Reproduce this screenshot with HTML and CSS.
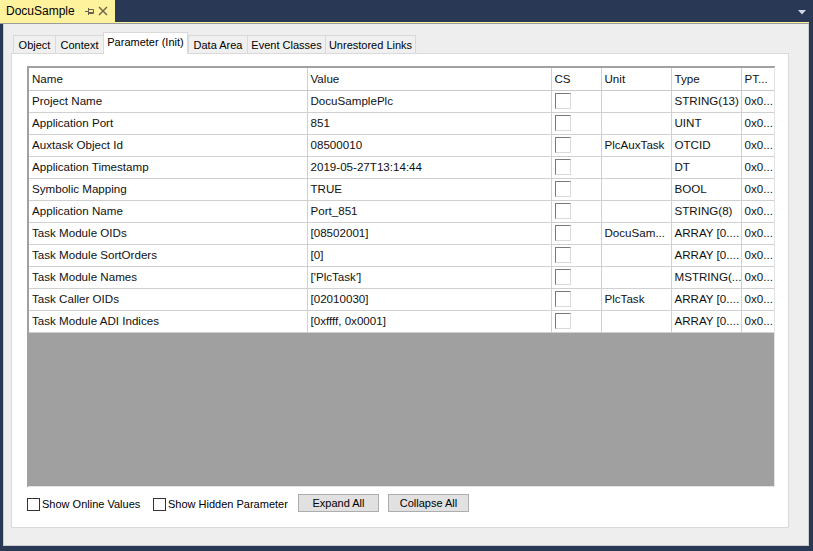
FILE: index.html
```html
<!DOCTYPE html>
<html>
<head>
<meta charset="utf-8">
<link rel="stylesheet" href="styles.css">
</head>
<body>
<div class="titlebar">
  <div class="doctab">
    <span class="doctitle">DocuSample</span>
    <svg class="pin" width="9" height="9" viewBox="0 0 9 9"><path d="M0 4.5H3.5M3.5 1V8M3.5 2.5H8.5V6.5H3.5M3.5 5.5H8.5" fill="none" stroke="#6b6348" stroke-width="1"/></svg>
    <svg class="close" width="10" height="10" viewBox="0 0 10 10"><path d="M1 1L9 9M9 1L1 9" stroke="#6b6348" stroke-width="1.4"/></svg>
  </div>
  <div class="spacer"></div>
  <svg class="dropdown" width="8" height="5" viewBox="0 0 8 5"><path d="M0 0H8L4 4.5Z" fill="#d0d7e5"/></svg>
</div>
<div class="accent"></div>
<div class="window">
  <div class="tabs">
    <div class="tab t-object">Object</div>
    <div class="tab t-context">Context</div>
    <div class="tab active t-param">Parameter (Init)</div>
    <div class="tab t-data">Data Area</div>
    <div class="tab t-event">Event Classes</div>
    <div class="tab t-links">Unrestored Links</div>
  </div>
  <div class="panel">
    <div class="grid">
      <table>
        <colgroup>
          <col class="c-name"><col class="c-value"><col class="c-cs"><col class="c-unit"><col class="c-type"><col class="c-pt">
        </colgroup>
        <thead>
          <tr><th>Name</th><th>Value</th><th>CS</th><th>Unit</th><th>Type</th><th>PT...</th></tr>
        </thead>
        <tbody>
          <tr><td>Project Name</td><td>DocuSamplePlc</td><td><span class="cb"></span></td><td></td><td>STRING(13)</td><td>0x0...</td></tr>
          <tr><td>Application Port</td><td>851</td><td><span class="cb"></span></td><td></td><td>UINT</td><td>0x0...</td></tr>
          <tr><td>Auxtask Object Id</td><td>08500010</td><td><span class="cb"></span></td><td>PlcAuxTask</td><td>OTCID</td><td>0x0...</td></tr>
          <tr><td>Application Timestamp</td><td>2019-05-27T13:14:44</td><td><span class="cb"></span></td><td></td><td>DT</td><td>0x0...</td></tr>
          <tr><td>Symbolic Mapping</td><td>TRUE</td><td><span class="cb"></span></td><td></td><td>BOOL</td><td>0x0...</td></tr>
          <tr><td>Application Name</td><td>Port_851</td><td><span class="cb"></span></td><td></td><td>STRING(8)</td><td>0x0...</td></tr>
          <tr><td>Task Module OIDs</td><td>[08502001]</td><td><span class="cb"></span></td><td>DocuSam...</td><td>ARRAY [0....</td><td>0x0...</td></tr>
          <tr><td>Task Module SortOrders</td><td>[0]</td><td><span class="cb"></span></td><td></td><td>ARRAY [0....</td><td>0x0...</td></tr>
          <tr><td>Task Module Names</td><td>['PlcTask']</td><td><span class="cb"></span></td><td></td><td>MSTRING(...</td><td>0x0...</td></tr>
          <tr><td>Task Caller OIDs</td><td>[02010030]</td><td><span class="cb"></span></td><td>PlcTask</td><td>ARRAY [0....</td><td>0x0...</td></tr>
          <tr><td>Task Module ADI Indices</td><td>[0xffff, 0x0001]</td><td><span class="cb"></span></td><td></td><td>ARRAY [0....</td><td>0x0...</td></tr>
        </tbody>
      </table>
    </div>
    <div class="controls">
      <label class="check first"><span class="box"></span>Show Online Values</label>
      <label class="check second"><span class="box"></span>Show Hidden Parameter</label>
      <button class="btn">Expand All</button>
      <button class="btn">Collapse All</button>
    </div>
  </div>
</div>
</body>
</html>
```
FILE: styles.css
```css
html, body {
  margin: 0;
  padding: 0;
}
body {
  width: 813px;
  height: 551px;
  background: #293955;
  font-family: "Liberation Sans", Arial, sans-serif;
  font-size: 11px;
  color: #000;
  overflow: hidden;
}
.titlebar {
  display: flex;
  height: 22px;
  align-items: stretch;
}
.doctab {
  width: 115px;
  background: #fff29d;
  display: flex;
  align-items: center;
  padding-left: 6px;
  box-sizing: border-box;
}
.doctitle {
  font-size: 12px;
  color: #000;
}
.pin {
  margin-left: 10px;
  margin-top: 1px;
}
.close {
  margin-left: 4px;
}
.spacer {
  flex: 1;
}
.dropdown {
  align-self: center;
  margin-right: 7px;
  margin-top: 3px;
}
.accent {
  height: 2px;
  width: 809px;
  background: #fff29d;
  border-bottom: 1px solid #9a9a9a;
  box-sizing: border-box;
}
.window {
  margin-left: 3px;
  width: 806px;
  height: 522px;
  box-sizing: border-box;
  background: #eeeeee;
  border-left: 1px solid #cccccc;
  border-right: 1px solid #cccccc;
  border-bottom: 1px solid #cccccc;
  padding: 8px 19px 0 7px;
}
.tabs {
  display: flex;
  align-items: flex-end;
  height: 21px;
  padding-left: 2px;
}
.tab {
  height: 18px;
  box-sizing: border-box;
  border: 1px solid #d9d9d9;
  border-bottom: none;
  border-right: none;
  background: #f0f0f0;
  padding-top: 2px;
  line-height: 15px;
  text-align: center;
  white-space: nowrap;
  overflow: hidden;
}
.t-object { width: 42px; }
.t-context { width: 48px; }
.t-param { width: 85px; }
.t-data { width: 59px; }
.t-event { width: 78px; }
.t-links { width: 91px; }
.tab:last-child {
  border-right: 1px solid #d9d9d9;
}
.tab.active {
  height: 22px;
  background: #ffffff;
  margin-bottom: -1px;
  border-right: 1px solid #d9d9d9;
  position: relative;
  z-index: 1;
}
.panel {
  background: #ffffff;
  border: 1px solid #d9d9d9;
  height: 475px;
  box-sizing: border-box;
  padding: 12px 13px 0 15px;
}
.grid {
  width: 748px;
  height: 421px;
  box-sizing: border-box;
  border-top: 2px solid #a0a0a0;
  border-left: 2px solid #a0a0a0;
  border-right: 1px solid #e3e3e3;
  border-bottom: 1px solid #e3e3e3;
  background: #a0a0a0;
  overflow: hidden;
}
table {
  border-collapse: collapse;
  table-layout: fixed;
  width: 746px;
  background: #ffffff;
  font-size: 11.6px;
  color: #111;
}
.c-name { width: 278px; }
.c-value { width: 244px; }
.c-cs { width: 50px; }
.c-unit { width: 70px; }
.c-type { width: 70px; }
.c-pt { width: 34px; }
th, td {
  height: 22px;
  box-sizing: border-box;
  padding: 0 0 0 3px;
  text-align: left;
  font-weight: normal;
  white-space: nowrap;
  overflow: hidden;
  border-right: 1px solid #d0d0d0;
  border-bottom: 1px solid #d0d0d0;
  vertical-align: middle;
  line-height: 20px;
}
th {
  height: 22px;
  padding-top: 1px;
  border-bottom: 1px solid #c8c8c8;
}
th:last-child, td:last-child {
  border-right: none;
}
.cb {
  display: block;
  width: 16px;
  height: 16px;
  box-sizing: border-box;
  border-top: 1px solid #7a7a7a;
  border-left: 1px solid #7a7a7a;
  border-right: 1px solid #dadada;
  border-bottom: 1px solid #dadada;
  background: #ffffff;
}
.controls {
  display: flex;
  align-items: center;
  height: 20px;
  margin-top: 7px;
}
.check {
  display: flex;
  align-items: center;
}
.check.first {
  width: 126px;
}
.check.second {
  width: 145px;
}
.box {
  width: 13px;
  height: 13px;
  box-sizing: border-box;
  border: 1px solid #333333;
  background: #ffffff;
  margin-right: 2px;
  margin-top: 1px;
}
.btn {
  width: 81px;
  height: 18px;
  box-sizing: border-box;
  border: 1px solid #adadad;
  background: #e1e1e1;
  font-family: "Liberation Sans", Arial, sans-serif;
  font-size: 11px;
  color: #000;
  padding: 0;
  margin-right: 9px;
  line-height: 14px;
  margin-top: -2px;
}
```
